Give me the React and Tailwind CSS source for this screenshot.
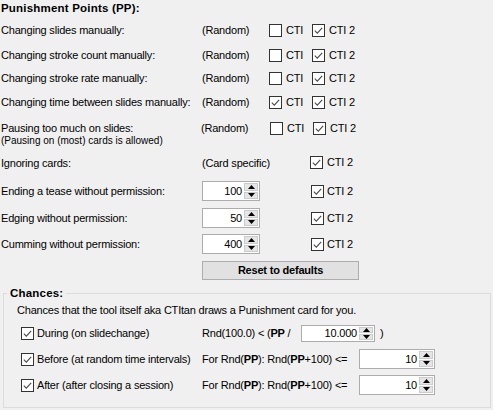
import React from 'react'

function Check({ checked }) {
  return (
    <span className="inline-flex w-[13px] h-[13px] shrink-0 items-center justify-center border border-[#333333] bg-white">
      {checked && (
        <svg width="11" height="11" viewBox="0 0 11 11">
          <path d="M1.8 5.6 L4.3 8.1 L9.2 2.8" fill="none" stroke="#4a4a4a" strokeWidth="1.1" />
        </svg>
      )}
    </span>
  )
}

function Arrow({ down }) {
  return (
    <svg width="7" height="4" viewBox="0 0 7 4">
      <path d={down ? 'M0 0 L7 0 L3.5 4 Z' : 'M3.5 0 L7 4 L0 4 Z'} fill="#000" />
    </svg>
  )
}

function Spin({ value, size }) {
  return (
    <div className={`flex bg-white border border-[#acacac] ${size}`}>
      <div className="flex-1 flex items-center justify-end pr-[2px]">{value}</div>
      <div className="flex flex-col w-[15px] py-[1px] pr-[1px] gap-[1px]">
        <div className="flex-1 flex items-center justify-center bg-[#e5e5e5] border border-[#cccccc]"><Arrow /></div>
        <div className="flex-1 flex items-center justify-center bg-[#e5e5e5] border border-[#cccccc]"><Arrow down /></div>
      </div>
    </div>
  )
}

function CtiRow({ label, cti, h }) {
  return (
    <div className={`flex items-center ${h}`}>
      <div className="w-[201px] whitespace-nowrap">{label}</div>
      <div className="w-[67px]">(Random)</div>
      <div className="w-[43px] flex items-center gap-[4px]"><Check checked={cti} />CTI</div>
      <div className="flex items-center gap-[4px]"><Check checked />CTI 2</div>
    </div>
  )
}

function SpinRow({ label, value }) {
  return (
    <div className="flex items-center h-[20px]">
      <div className="w-[201px] whitespace-nowrap">{label}</div>
      <Spin value={value} size="w-[58px] h-[20px]" />
      <div className="ml-[51px] flex items-center gap-[3px]"><Check checked />CTI 2</div>
    </div>
  )
}

function FormulaPP() {
  return (
    <span className="whitespace-nowrap">For Rnd(<b>PP</b>): Rnd(<b>PP</b>+100) &lt;=</span>
  )
}

export default function App() {
  return (
    <div className="w-[493px] h-[410px] overflow-hidden bg-[#f0f0f0] text-black text-[11px] leading-[13px] tracking-[-0.2px] font-['Liberation_Sans',Arial,sans-serif] pl-[1px]">
      <div className="h-[17px] flex items-center font-bold text-[11.5px] tracking-[0.2px]">Punishment Points (PP):</div>
      <CtiRow label="Changing slides manually:" h="h-[26px]" />
      <CtiRow label="Changing stroke count manually:" h="h-[24px]" />
      <CtiRow label="Changing stroke rate manually:" h="h-[23px]" />
      <CtiRow label="Changing time between slides manually:" cti h="h-[24px]" />

      {/* Pausing row with note */}
      <div className="pt-[8px]">
        <div className="flex items-center h-[13px]">
          <div className="w-[201px]">Pausing too much on slides:</div>
          <div className="w-[69px] -ml-[1px]">(Random)</div>
          <div className="w-[43px] flex items-center gap-[4px]"><Check />CTI</div>
          <div className="flex items-center gap-[4px]"><Check checked />CTI 2</div>
        </div>
        <div className="h-[12px] text-[10px] leading-[12px] tracking-normal whitespace-nowrap">(Pausing on (most) cards is allowed)</div>
      </div>

      <div className="flex items-center h-[23px] mt-[5px]">
        <div className="w-[201px]">Ignoring cards:</div>
        <div className="w-[108px]">(Card specific)</div>
        <div className="flex items-center gap-[4px] -mt-[3px]"><Check checked />CTI 2</div>
      </div>

      <div className="mt-[6px]"><SpinRow label="Ending a tease without permission:" value="100" /></div>
      <div className="mt-[7px]"><SpinRow label="Edging without permission:" value="50" /></div>
      <div className="mt-[6px]"><SpinRow label="Cumming without permission:" value="400" /></div>

      <div className="pl-[201px] mt-[7px]">
        <button className="w-[157px] h-[19px] bg-[#e1e1e1] border border-[#adadad] font-bold flex items-center justify-center">
          Reset to defaults
        </button>
      </div>

      {/* Chances group */}
      <div className="relative mt-[13px] ml-[2px] w-[488px] h-[115px] border border-[#dcdcdc]">
        <div className="absolute -top-[7px] left-[3px] px-[3px] bg-[#f0f0f0] font-bold leading-[13px] text-[11.5px] tracking-[0.2px]">Chances:</div>
        <div className="pl-[13px] pt-[9px]">
          <div className="h-[14px] flex items-center whitespace-nowrap">
            Chances that the tool itself aka CTItan draws a Punishment card for you.
          </div>

          <div className="mt-[6px] h-[20px] flex items-center pl-[4px]">
            <div className="w-[181px] flex items-center gap-[3px]"><Check checked />During (on slidechange)</div>
            <span className="w-[99px] whitespace-nowrap">Rnd(100.0) &lt; (<b>PP</b> /</span>
            <Spin value="10.000" size="w-[74px] h-[17px]" />
            <span className="ml-[5px]">)</span>
          </div>

          <div className="mt-[6px] h-[20px] flex items-center pl-[4px]">
            <div className="w-[181px] flex items-center gap-[3px] whitespace-nowrap"><Check checked />Before (at random time intervals)</div>
            <span className="w-[157px]"><FormulaPP /></span>
            <Spin value="10" size="w-[76px] h-[20px]" />
          </div>

          <div className="mt-[6px] h-[20px] flex items-center pl-[4px]">
            <div className="w-[181px] flex items-center gap-[3px] whitespace-nowrap"><Check checked />After (after closing a session)</div>
            <span className="w-[157px]"><FormulaPP /></span>
            <Spin value="10" size="w-[76px] h-[20px]" />
          </div>
        </div>
      </div>
    </div>
  )
}
